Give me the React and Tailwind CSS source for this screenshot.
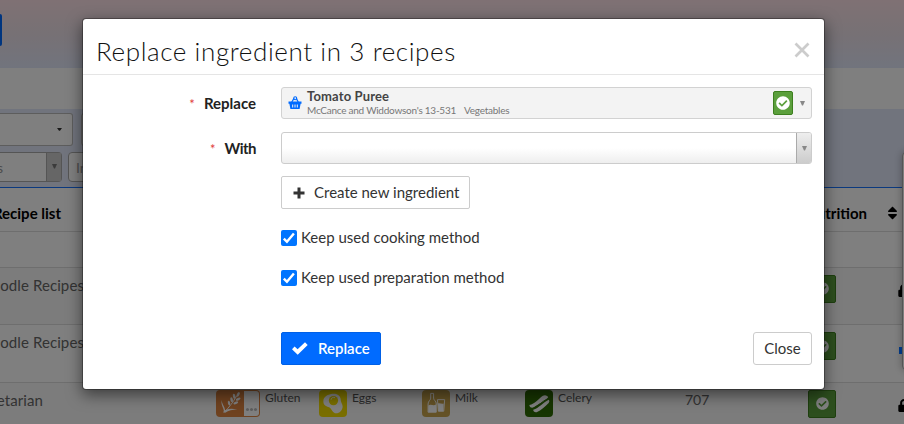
import { FaCheckCircle, FaSort, FaLock } from "react-icons/fa";

const allergens = [
  { label: "Gluten", icon: "gluten", more: true },
  { label: "Eggs", icon: "eggs" },
  { label: "Milk", icon: "milk" },
  { label: "Celery", icon: "celery" },
];

const tileColors = {
  gluten: "bg-[#df8540]",
  eggs: "bg-[#f2dc00]",
  milk: "bg-[#c9a54d]",
  celery: "bg-[#2f6d05]",
};

const Caret = ({ className = "h-[5px] w-[6px]" }) => (
  <svg viewBox="0 0 6 5" preserveAspectRatio="none" className={className}>
    <path d="M0 0h6L3.6 4.6H2.4z" fill="currentColor" />
  </svg>
);

const BasketIcon = () => (
  <svg viewBox="0 0 14 14" className="size-[14px] text-[#006bff]">
    <path d="M3.600 6.500L6 2.200M10.400 6.500L8.300 2.200" stroke="currentColor" strokeWidth="1.300" />
    <circle cx="7.200" cy="2.200" r="1.500" fill="none" stroke="currentColor" strokeWidth="1.100" />
    <path d="M.500 5.600h13v2.200h-.9L11.600 13H2.400L1.400 7.800H.5z" fill="currentColor" />
    <path d="M4.700 8.500v3M7 8.500v3M9.300 8.500v3" stroke="#f3f3f3" strokeWidth="1" />
  </svg>
);

const PlusIcon = () => (
  <svg viewBox="0 0 12 12" className="size-3">
    <path d="M6 0.500v11M.500 6h11" stroke="currentColor" strokeWidth="3" />
  </svg>
);

const TickIcon = () => (
  <svg viewBox="0 0 16 13" className="h-[13px] w-4">
    <path d="M0 7.300L2.600 4.600 5.600 7.300 13 0.300 15.700 2.900 5.700 12.700z" fill="currentColor" />
  </svg>
);

const AllergenIcon = ({ name }) => (
  <svg viewBox="0 0 28 28" className="h-[27px] w-7 shrink-0" fill="#fff" stroke="none">
    {name === "gluten" && (
      <g>
        <path d="M9 22C13 18 17 13 21 6" fill="none" stroke="#fff" strokeWidth="1" />
        <ellipse cx="22.500" cy="4.500" rx="1.300" ry="2.600" transform="rotate(28 22.500 4.500)" />
        <ellipse cx="18.300" cy="6.500" rx="1.300" ry="2.600" transform="rotate(-12 18.300 6.500)" />
        <ellipse cx="22.500" cy="9.500" rx="1.300" ry="2.600" transform="rotate(65 22.500 9.500)" />
        <ellipse cx="15.700" cy="10" rx="1.300" ry="2.600" transform="rotate(-12 15.700 10)" />
        <ellipse cx="20" cy="13.300" rx="1.300" ry="2.600" transform="rotate(68 20 13.300)" />
        <ellipse cx="13" cy="13.500" rx="1.200" ry="2.500" transform="rotate(-12 13 13.500)" />
        <path d="M5.500 10c-.5 4 3.500 7 3.500 12H7.700C7.500 18 4 15 5.500 10zM6.500 23c4-4 8-4 15-3-5 .5-9 1-12.500 3.500z" />
      </g>
    )}
    {name === "eggs" && (
      <g>
        <path d="M13 4c5-1 9 2 9 6 0 3 2 4 2 7 0 4-4 8-8 7-3-1-3-4-6-6-3-1-6-2-6-6 0-5 4-7 9-8z" />
        <circle cx="14.500" cy="11" r="4.800" fill="#f2dc00" />
        <path d="M12 10a3 3 0 0 1 4-2" fill="none" stroke="#fff" strokeWidth="1" />
      </g>
    )}
    {name === "milk" && (
      <g>
        <path d="M8.500 3.500h3v5c0 2 2.800 3 2.800 6V23H5.800v-8.500c0-3 2.700-4 2.700-6z" fill="none" stroke="#fff" strokeWidth="1" />
        <path d="M6 16c3-2 5 1 8-1v8H6zM16 14c2-1 4 1 6 0l-.5 8h-5z" />
        <path d="M15.500 10h7.500l-1 12h-5.500z" fill="none" stroke="#fff" strokeWidth="1" />
      </g>
    )}
    {name === "celery" && (
      <g>
        <path d="M4 15.500c6-1 9-6 14-9.500 2.500-1.500 5 0 5.500 1.500-3 4.500-9.500 6.500-15 10.500-2.500 1-4.500-.5-4.500-2.500z" />
        <path d="M8 20.500c6-2 10-7.500 16-10.500 1 1 1 2 0 3.500-4 4-7.500 7.500-12.500 9.500-2 .5-3.500-1-3.500-2.500z" />
        <path d="M8 19C14 16 17 12 23 9" fill="none" stroke="#2f6d05" strokeWidth="1" />
      </g>
    )}
  </svg>
);

const Allergen = ({ label, icon, more }) => (
  <div className="flex w-[103px] shrink-0 items-start">
    <div className={`flex h-[27px] shrink-0 overflow-hidden rounded-[4px] ${tileColors[icon]} ${more ? "w-11" : "w-7"}`}>
      <AllergenIcon name={icon} />
      {more && (
        <div className="my-px mr-px flex h-[25px] w-[15px] items-end justify-center gap-px rounded-r-[3px] bg-white pb-[5px]">
          <i className="size-[3px] rounded-full bg-[#bbb]" />
          <i className="size-[3px] rounded-full bg-[#bbb]" />
          <i className="size-[3px] rounded-full bg-[#bbb]" />
        </div>
      )}
    </div>
    <span className="ml-[5px] text-[12px] leading-[15px] text-[#555]">{label}</span>
  </div>
);

const NutritionBadge = () => (
  <div className="flex h-7 w-7 shrink-0 items-center justify-center rounded-[2px] border border-[#3d7f1f] bg-[#5b9f3c] text-white">
    <FaCheckCircle className="size-[13px]" />
  </div>
);

const rows = [
  { name: "Noodle Recipes", right: "w-[84px]", tint: "bg-[#f8f8f8]", locked: true },
  { name: "Noodle Recipes", right: "w-[84px]", tint: "bg-white" },
  { name: "Vegetarian", right: "w-[43px]", tint: "bg-[#f8f8f8]", allergens, kcal: "707", locked: true },
];

const RecipeRow = ({ row }) => (
  <div className={`flex h-[57.500px] shrink-0 border-b border-[#ddd] pt-[7px] ${row.tint}`}>
    <div className="flex w-[216px] shrink-0">
      <div className={`flex shrink-0 justify-end text-[15px] leading-[20px] tracking-[0.1px] whitespace-nowrap text-[#666] ${row.right}`}>{row.name}</div>
    </div>
    <div className="flex w-[469px] shrink-0">
      {row.allergens?.map((a) => <Allergen key={a.label} {...a} />)}
    </div>
    <div className="w-[123px] shrink-0 text-[14px] leading-[20px] text-[#666]">{row.kcal}</div>
    <NutritionBadge />
    {row.locked && <FaLock className="mt-[9px] ml-[62px] h-[13px] w-[12px] shrink-0 text-black" />}
  </div>
);

const RecipePage = () => (
  <div className="flex h-full flex-col">
    <div className="h-[68px] shrink-0 bg-linear-to-b from-[#ffe2e8] via-[#eee2ea] to-[#e3e9fb] pt-[14px]">
      <div className="h-8 w-[2px] rounded-r-[2px] bg-[#006bff]" />
    </div>
    <div className="h-[41px] shrink-0 bg-white" />
    <div className="h-[79px] shrink-0 border-b border-[#1673ff] bg-[#e3e9fb] pt-1">
      <div className="flex gap-2">
        <div className="flex h-[33px] w-[73px] items-center justify-end rounded-r-[3px] border border-l-0 border-[#bbb] bg-white pr-[10px]">
          <Caret className="h-[3px] w-[5px] text-[#333]" />
        </div>
        <div className="h-[33px] w-40 rounded-[3px] border border-[#bbb] bg-white" />
      </div>
      <div className="mt-[6px] flex gap-[6px] text-[14px] text-[#999]">
        <div className="flex h-[30px] w-[62px] rounded-r-[4px] border border-l-0 border-[#aaa] bg-white">
          <div className="flex w-[46px] shrink-0 items-center">
            <div className="flex w-[3px] justify-end">s</div>
          </div>
          <div className="flex flex-1 justify-center border-l border-[#aaa] bg-[#ccc] pt-[11px]">
            <Caret className="h-[5px] w-[5px] text-[#777]" />
          </div>
        </div>
        <div className="flex h-[30px] w-40 items-center rounded-[4px] border border-[#aaa] bg-white pl-[7px]">Ingredient</div>
      </div>
    </div>
    <div className="flex h-11 shrink-0 items-center border-b border-[#ddd] bg-white pt-[7px] text-[15px] font-bold text-black">
      <div className="flex w-[61px] shrink-0 justify-end whitespace-nowrap">Recipe list</div>
      <div className="flex w-[806px] shrink-0 justify-end">Nutrition</div>
      <FaSort className="ml-5 h-4 w-[11px]" />
    </div>
    <div className="h-[35.500px] shrink-0 border-b border-[#ddd] bg-white" />
    {rows.map((row, i) => <RecipeRow key={i} row={row} />)}
  </div>
);

const Field = ({ label, children, tracking = "" }) => (
  <div className="flex h-8 items-center">
    <div className="flex w-[173px] shrink-0 items-center justify-end gap-[9px] text-[15px] font-bold text-[#222]">
      <span className="mt-1 text-[13px] font-normal text-[#e03a3a]">*</span>
      <span className={tracking}>{label}</span>
    </div>
    <div className="ml-[25px] flex h-full w-[531px]">{children}</div>
  </div>
);

const CheckOption = ({ children }) => (
  <label className="flex h-[17px] items-center gap-1 text-[15px] text-[#333]">
    <span className="flex size-4 items-center justify-center rounded-[2px] bg-[#0075ff]">
      <svg viewBox="0 0 17 17" className="size-4">
        <path d="M3 9.200l3.300 3.300L13.700 3.700" fill="none" stroke="#fff" strokeWidth="2.600" />
      </svg>
    </span>
    {children}
  </label>
);

const ReplaceDialog = () => (
  <div className="absolute top-[18px] left-[82px] h-[372px] w-[743px] rounded-[4px] border border-black/30 bg-white bg-clip-padding shadow-[0_5px_15px_rgba(0,0,0,0.5)]">
    <div className="flex h-14 items-center justify-between border-b border-[#e5e5e5] pr-[14px] pl-[13px]">
      <h1 className="pt-[9px] text-[26px] font-light tracking-[0.6px] whitespace-nowrap text-[#111]">Replace ingredient in 3 recipes</h1>
      <svg viewBox="0 0 16 16" className="mt-[7px] size-4 text-[#ccc]">
        <path d="M1.500 1.500l13 13M14.500 1.500l-13 13" stroke="currentColor" strokeWidth="2.700" />
      </svg>
    </div>
    <div className="pt-3">
      <Field label="Replace">
        <div className="flex w-full items-center rounded-[3px] border-[1.500px] border-[#d2d2d2] bg-[#f3f3f3] pl-[6px] text-[#444]">
          <BasketIcon />
          <div className="ml-[5px] flex-1 whitespace-nowrap">
            <div className="text-[13px] leading-[14px] font-bold tracking-[0.150px]">Tomato Puree</div>
            <div className="flex gap-2 pt-px text-[10px] leading-[13px] tracking-[-0.250px] text-[#777]">
              <span>McCance and Widdowson's 13-531</span>
              <span>Vegetables</span>
            </div>
          </div>
          <div className="flex h-6 w-5 items-center justify-center rounded-[2px] border border-[#3d7f1f] bg-[#5b9f3c] text-white">
            <FaCheckCircle className="size-[14px]" />
          </div>
          <Caret className="mr-[6px] ml-[7px] h-[5px] w-[5px] text-[#888]" />
        </div>
      </Field>
      <div className="h-[13px]" />
      <Field label="With" tracking="tracking-[-0.500px]">
        <div className="flex w-full justify-end overflow-hidden rounded-[3px] border border-[#ccc] bg-linear-to-b from-white from-50% to-[#eee]">
          <div className="flex w-[15px] items-center justify-center border-l border-[#aaa] bg-linear-to-b from-[#eee] to-[#ccc]">
            <Caret className="h-[5px] w-[5px] text-[#888]" />
          </div>
        </div>
      </Field>
      <div className="ml-[198px] flex flex-col items-start pt-3">
        <button className="flex h-[33px] w-[189px] items-center rounded-[2px] border border-[#ccc] bg-white pl-[11px] text-[15px] whitespace-nowrap text-[#333]">
          <span className="mr-[9px]"><PlusIcon /></span>
          Create new ingredient
        </button>
        <div className="mt-5 flex flex-col gap-[23px]">
          <CheckOption>Keep used cooking method</CheckOption>
          <CheckOption>Keep used preparation method</CheckOption>
        </div>
      </div>
      <div className="mt-[46px] mr-3 ml-[198px] flex justify-between text-[15px]">
        <button className="flex h-[33px] w-[100px] items-center rounded-[2px] border border-[#0060e6] bg-[#006bff] pl-[10px] font-semibold text-white">
          <span className="mr-[10px]"><TickIcon /></span>
          Replace
        </button>
        <button className="h-[33px] w-[59px] rounded-[3px] border border-[#ccc] bg-white text-[#333]">Close</button>
      </div>
    </div>
  </div>
);

export default function App() {
  return (
    <div className="relative h-[424px] w-[904px] overflow-hidden bg-white font-['Lato','Open_Sans',sans-serif]">
      <RecipePage />
      {/* side drawer peeking in from the right edge */}
      <div className="absolute top-[152px] left-[902px] h-[218px] w-10 rounded-[4px] border border-[#aaa] bg-white shadow-[0_0_8px_rgba(0,0,0,0.3)]" />
      <div className="absolute top-[347px] left-[899px] h-[7px] w-[3px] bg-[#006bff]" />
      <div className="absolute inset-0 bg-black/50" />
      <ReplaceDialog />
    </div>
  );
}
